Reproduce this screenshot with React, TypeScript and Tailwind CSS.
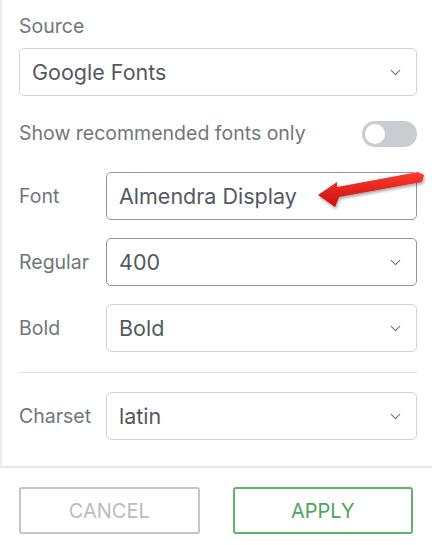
import { ChevronDown } from 'lucide-react';

const font = { fontFamily: 'Inter, "Noto Sans", sans-serif' };

const SelectBox = ({ value, dark = false }: { value: string; dark?: boolean }) => (
  <div
    className={`flex-1 h-[48px] rounded-[5px] border flex items-center justify-between pl-3 pr-3 ${
      dark ? 'border-[#8e959c]' : 'border-[#d2d4d6]'
    }`}
  >
    <span className="text-[21.5px] text-[#54595f]">{value}</span>
    <ChevronDown size={17} strokeWidth={1.5} className="text-[#6d7278]" />
  </div>
);

const Row = ({ label, children }: { label: string; children: React.ReactNode }) => (
  <div className="flex items-center">
    <span className="w-[87px] shrink-0 text-[19.5px] text-[#70767c]">{label}</span>
    {children}
  </div>
);

const RedArrow = () => (
  <svg className="absolute left-[308px] top-[162px]" width="124" height="52" viewBox="308 162 124 52">
    <defs>
      <linearGradient id="arr" x1="0" y1="0" x2="0" y2="1">
        <stop offset="0" stopColor="#ff3b30" />
        <stop offset="1" stopColor="#c80f0f" />
      </linearGradient>
      <filter id="sh" x="-20%" y="-40%" width="140%" height="180%">
        <feDropShadow dx="1" dy="2" stdDeviation="1.5" floodColor="#000" floodOpacity="0.35" />
      </filter>
    </defs>
    <polygon
      points="318,195 337,182 337,187 418,172 424,175 422,182 339,197 335,207"
      fill="url(#arr)"
      filter="url(#sh)"
    />
  </svg>
);

export default function App() {
  return (
    <div className="relative w-[432px] h-[545px] bg-white flex flex-col overflow-hidden" style={font}>
      <div className="flex-1 border-l-2 border-[#ececec] pl-[17px] pr-[15px] pt-[14px] flex flex-col">
        <span className="text-[19.5px] text-[#70767c] leading-[24px]">Source</span>
        <div className="mt-[10px] flex">
          <SelectBox value="Google Fonts" />
        </div>
        <div className="mt-[23px] flex items-center justify-between">
          <span className="text-[19.5px] text-[#70767c]">Show recommended fonts only</span>
          <div className="w-[55px] h-[26px] rounded-full bg-[#c9cdd3] flex items-center pl-[3px]">
            <div className="w-[20px] h-[20px] rounded-full bg-white" />
          </div>
        </div>
        <div className="mt-[24px] flex flex-col gap-[18px]">
          <Row label="Font">
            <div className="flex-1 h-[48px] rounded-[5px] border border-[#8e959c] flex items-center pl-3">
              <span className="text-[21.5px] text-[#54595f]">Almendra Display</span>
            </div>
          </Row>
          <Row label="Regular">
            <SelectBox value="400" dark />
          </Row>
          <Row label="Bold">
            <SelectBox value="Bold" />
          </Row>
        </div>
        <div className="mt-[20px] h-px bg-[#e2e3e4]" />
        <div className="mt-[19px]">
          <Row label="Charset">
            <SelectBox value="latin" />
          </Row>
        </div>
      </div>
      <div className="border-t-2 border-[#e6e7e8] px-[19px] pt-[19px] pb-[11px] flex gap-[33px]">
        <button className="flex-1 h-[47px] rounded-[3px] border-2 border-[#c4c6c8] text-[20px] text-[#b9bdc2]">
          CANCEL
        </button>
        <button className="flex-1 h-[47px] rounded-[3px] border-2 border-[#5fb56a] text-[20px] text-[#4aa65a]">
          APPLY
        </button>
      </div>
      <RedArrow />
    </div>
  );
}
